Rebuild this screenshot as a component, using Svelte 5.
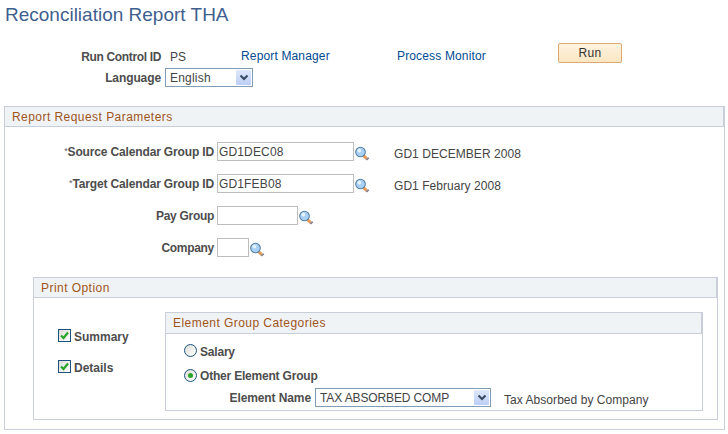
<script>
	let langs = ['English'];
</script>

{#snippet lens()}
	<svg class="lens" width="15" height="18" viewBox="0 0 15 18">
		<path d="M8.5 12.5 L12 16" stroke="#e39a58" stroke-width="3"/>
		<path d="M11.5 17 L13.8 14.8" stroke="#6b7f94" stroke-width="1.4"/>
		<circle cx="5.5" cy="9" r="4.8" fill="#a9d0f5" stroke="#56809f" stroke-width="1.1"/>
		<circle cx="4.3" cy="7.6" r="1.9" fill="#e4f2fd"/>
	</svg>
{/snippet}

{#snippet drop(text, cls)}
	<div class="select {cls}">
		<span class="selval">{text}</span>
		<span class="selbtn">
			<svg width="10" height="7" viewBox="0 0 10 7"><path d="M1.5 1.5 L5 5 L8.5 1.5" fill="none" stroke="#34495f" stroke-width="2"/></svg>
		</span>
	</div>
{/snippet}

{#snippet check(label)}
	<div class="checkrow">
		<span class="checkbox">
			<svg width="11" height="11" viewBox="0 0 11 11"><path d="M2 5.5 L4.5 8 L9 2.5" fill="none" stroke="#2aa52a" stroke-width="2.2"/></svg>
		</span>
		<span class="lab">{label}</span>
	</div>
{/snippet}

<div class="page">
	<h1>Reconciliation Report THA</h1>

	<div class="top">
		<div class="toprow first">
			<span class="lab toplab">Run Control ID</span>
			<span class="val runid">PS</span>
			<a class="link rm" href="#rm">Report Manager</a>
			<a class="link pm" href="#pm">Process Monitor</a>
			<button class="run">Run</button>
		</div>
		<div class="toprow second">
			<span class="lab toplab">Language</span>
			{@render drop(langs[0], 'lang')}
		</div>
	</div>

	<section class="outer">
		<div class="head">Report Request Parameters</div>
		<div class="fields">
			<div class="field">
				<span class="lab flab long"><sup>*</sup>Source Calendar Group ID</span>
				<input class="txt w137" value="GD1DEC08" />
				{@render lens()}
				<span class="val desc">GD1 DECEMBER 2008</span>
			</div>
			<div class="field">
				<span class="lab flab long"><sup>*</sup>Target Calendar Group ID</span>
				<input class="txt w137" value="GD1FEB08" />
				{@render lens()}
				<span class="val desc">GD1 February 2008</span>
			</div>
			<div class="field">
				<span class="lab flab">Pay Group</span>
				<input class="txt w81" />
				{@render lens()}
			</div>
			<div class="field">
				<span class="lab flab">Company</span>
				<input class="txt w32" />
				{@render lens()}
			</div>
		</div>

		<section class="print">
			<div class="head h2">Print Option</div>
			<div class="printbody">
				<div class="checks">
					{@render check('Summary')}
					{@render check('Details')}
				</div>
				<section class="elem">
					<div class="head h3">Element Group Categories</div>
					<div class="radios">
						<div class="radiorow">
							<span class="radio"></span>
							<span class="lab">Salary</span>
						</div>
						<div class="radiorow second">
							<span class="radio on"><i></i></span>
							<span class="lab">Other Element Group</span>
						</div>
						<div class="namerow">
							<span class="lab">Element Name</span>
							{@render drop('TAX ABSORBED COMP', 'name')}
							<span class="val taxdesc">Tax Absorbed by Company</span>
						</div>
					</div>
				</section>
			</div>
		</section>
	</section>
</div>

<style>
	:global(body) {
		margin: 0;
		background: #fff;
	}

	.page {
		width: 728px;
		height: 434px;
		overflow: hidden;
		font-family: "Liberation Sans", Arial, sans-serif;
		font-size: 12px;
		color: #444;
	}

	h1 {
		margin: 0;
		padding: 3px 0 0 5px;
		height: 27px;
		font-size: 19px;
		line-height: 24px;
		font-weight: 400;
		color: #3f5f8f;
	}

	.top {
		height: 76px;
		padding-top: 13px;
		box-sizing: border-box;
	}

	.toprow {
		display: flex;
		align-items: center;
	}

	.toprow.first {
		height: 20px;
	}

	.toprow.first .lab,
	.toprow.first .val {
		margin-top: 8px;
	}

	.toprow.first .link {
		margin-top: 6px;
	}

	.toprow.second {
		height: 19px;
		margin-top: 5px;
	}

	.toprow.second .lab {
		margin-top: 1px;
		letter-spacing: -0.1px;
	}

	.lab {
		font-size: 12px;
		font-weight: 700;
		color: #4d4d4d;
		white-space: nowrap;
	}

	.toplab {
		width: 161px;
		text-align: right;
		letter-spacing: -0.35px;
	}

	.val {
		color: #444;
		white-space: nowrap;
	}

	.runid {
		margin-left: 9px;
		width: 71px;
	}

	.link {
		color: #004b91;
		text-decoration: none;
		letter-spacing: 0.15px;
	}

	.rm {
		width: 156px;
	}

	.pm {
		width: 161px;
	}

	.run {
		width: 64px;
		height: 20px;
		padding: 0;
		border: 1px solid #e0a871;
		border-radius: 2px;
		background: linear-gradient(#fdf3de, #fae6c3);
		font-family: inherit;
		font-size: 12px;
		color: #333;
		letter-spacing: 0.3px;
	}

	.select {
		display: flex;
		align-items: center;
		justify-content: space-between;
		box-sizing: border-box;
		height: 19px;
		border: 1px solid #7f9db9;
		background: #fff;
		padding: 1px;
	}

	.select.lang {
		width: 88px;
		margin-left: 4px;
	}

	.select.name {
		width: 176px;
		margin-left: 4px;
		flex: none;
	}

	.selval {
		padding-left: 3px;
		letter-spacing: 0.2px;
	}

	.select.name .selval {
		letter-spacing: -0.12px;
	}

	.selbtn {
		display: flex;
		align-items: center;
		justify-content: center;
		width: 15px;
		height: 15px;
		border-radius: 1px;
		background: linear-gradient(#dfe8fb, #bccef5);
	}

	.outer {
		margin-left: 4px;
		width: 721px;
		height: 324px;
		box-sizing: border-box;
		border: 1px solid #c9cfd8;
		border-top: 0;
	}

	.head {
		box-sizing: border-box;
		height: 21px;
		margin: 0 -1px;
		padding-left: 7px;
		border: 1px solid #c9cfd8;
		border-right-width: 2px;
		background: #f0f3f5;
		color: #a0551a;
		line-height: 20px;
		letter-spacing: 0.45px;
		white-space: nowrap;
	}

	.fields {
		padding-top: 15px;
	}

	.field {
		display: flex;
		align-items: center;
		height: 19px;
		margin-bottom: 13px;
	}

	.flab {
		width: 209px;
		padding-top: 1px;
		text-align: right;
		letter-spacing: -0.3px;
	}

	.flab.long {
		letter-spacing: -0.15px;
	}

	sup {
		font-size: 9px;
		line-height: 0;
		vertical-align: 2px;
		font-weight: 400;
		color: #666;
	}

	.txt {
		box-sizing: border-box;
		height: 19px;
		margin: 0 0 0 3px;
		padding: 0 1px;
		border: 1px solid #bdbdbd;
		font-family: inherit;
		font-size: 12px;
		color: #444;
		letter-spacing: 0.15px;
		outline: none;
	}

	.w137 {
		width: 137px;
	}

	.w81 {
		width: 81px;
	}

	.w32 {
		width: 32px;
	}

	.lens {
		margin-left: 1px;
		flex: none;
	}

	.desc {
		margin: 4px 0 0 24px;
		letter-spacing: 0.05px;
	}

	.print {
		box-sizing: border-box;
		width: 685px;
		height: 143px;
		margin: 20px 0 0 28px;
		border: 1px solid #c9cfd8;
		border-top: 0;
	}

	.printbody {
		display: flex;
		padding-top: 14px;
	}

	.checks {
		width: 131px;
		padding: 17px 0 0 24px;
		box-sizing: border-box;
	}

	.checkrow {
		display: flex;
		align-items: center;
		height: 13px;
		margin-bottom: 18px;
		gap: 3px;
	}

	.checkrow .lab {
		margin-top: 3px;
	}

	.checkbox {
		display: flex;
		align-items: center;
		justify-content: center;
		box-sizing: border-box;
		width: 13px;
		height: 13px;
		border: 1px solid #1c5180;
		background: linear-gradient(135deg, #dcdcd6, #fff);
	}

	.elem {
		box-sizing: border-box;
		width: 538px;
		height: 99px;
		border: 1px solid #c9cfd8;
		border-top: 0;
	}

	.h3 {
		height: 22px;
	}

	.radios {
		padding: 10px 0 0 18px;
	}

	.radiorow {
		display: flex;
		align-items: center;
		height: 13px;
		gap: 3px;
	}

	.radiorow .lab {
		margin-top: 2px;
		letter-spacing: -0.2px;
	}

	.radiorow.second {
		margin-top: 12px;
	}

	.radiorow.second .lab {
		margin-top: 0;
	}

	.radio {
		display: flex;
		align-items: center;
		justify-content: center;
		box-sizing: border-box;
		width: 13px;
		height: 13px;
		border: 1px solid #1c5180;
		border-radius: 50%;
		background: linear-gradient(135deg, #dcdcd6, #fff);
	}

	.radio i {
		display: block;
		width: 5px;
		height: 5px;
		border-radius: 50%;
		background: #2aa52a;
	}

	.namerow {
		display: flex;
		align-items: center;
		height: 19px;
		margin: 6px 0 0 45px;
	}

	.namerow .lab {
		width: 82px;
		text-align: right;
		flex: none;
		letter-spacing: -0.1px;
	}

	.taxdesc {
		margin: 5px 0 0 13px;
		letter-spacing: 0.05px;
	}
</style>
